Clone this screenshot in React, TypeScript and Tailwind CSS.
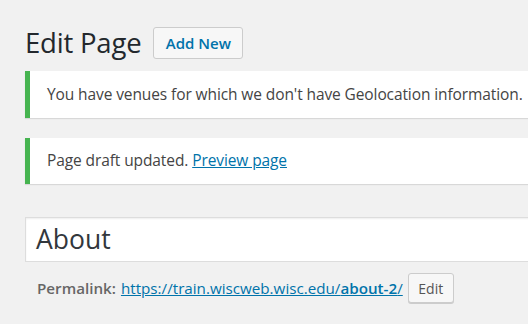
export default function App() {
  return (
    <div className="w-[528px] h-[324px] overflow-hidden bg-[#f1f1f1] pl-[25px] font-['Open_Sans',sans-serif]">
      {/* Heading */}
      <div className="flex items-center pt-[27px] h-[59px] w-[600px]">
        <h1 className="text-[27.5px] leading-[32px] text-[#23282d] tracking-[-0.2px]">Edit Page</h1>
        <button className="ml-[12px] h-[32px] w-[90px] rounded-[3px] border border-[#ccc] bg-[#f7f7f7] text-[15px] font-semibold text-[#0073aa]">
          Add New
        </button>
      </div>

      {/* Notices */}
      <div className="mt-[12px] w-[560px] h-[47px] flex items-center bg-white border-l-[5px] border-[#46b450] shadow-[0_1px_1px_rgba(0,0,0,0.1)] pl-[17px]">
        <p className="text-[15.5px] text-[#444] tracking-[-0.1px] whitespace-nowrap">
          You have venues for which we don't have Geolocation information.
        </p>
      </div>
      <div className="mt-[20px] w-[560px] h-[46px] flex items-center bg-white border-l-[5px] border-[#46b450] shadow-[0_1px_1px_rgba(0,0,0,0.1)] pl-[17px]">
        <p className="text-[15.5px] text-[#444] tracking-[-0.1px]">
          Page draft updated.{" "}
          <a href="#" className="text-[#0073aa] underline">Preview page</a>
        </p>
      </div>

      {/* Title */}
      <div className="mt-[33px] w-[560px] h-[45px] flex items-center bg-white border border-[#ddd] shadow-[inset_0_1px_2px_rgba(0,0,0,0.07)] pl-[10px]">
        <span className="text-[26.5px] text-[#32373c]">About</span>
      </div>

      {/* Permalink */}
      <div className="mt-[11px] flex items-center pl-[12px] text-[15.2px]">
        <strong className="font-semibold text-[#666]">Permalink:</strong>
        <a href="#" className="ml-[5px] text-[#0073aa] underline">
          https://train.wiscweb.wisc.edu/<span className="font-semibold">about-2</span>/
        </a>
        <button className="ml-[5px] h-[30px] w-[46px] rounded-[3px] border border-[#ccc] bg-[#f7f7f7] text-[14px] text-[#555] shadow-[0_1px_0_#ccc]">
          Edit
        </button>
      </div>
    </div>
  );
}
